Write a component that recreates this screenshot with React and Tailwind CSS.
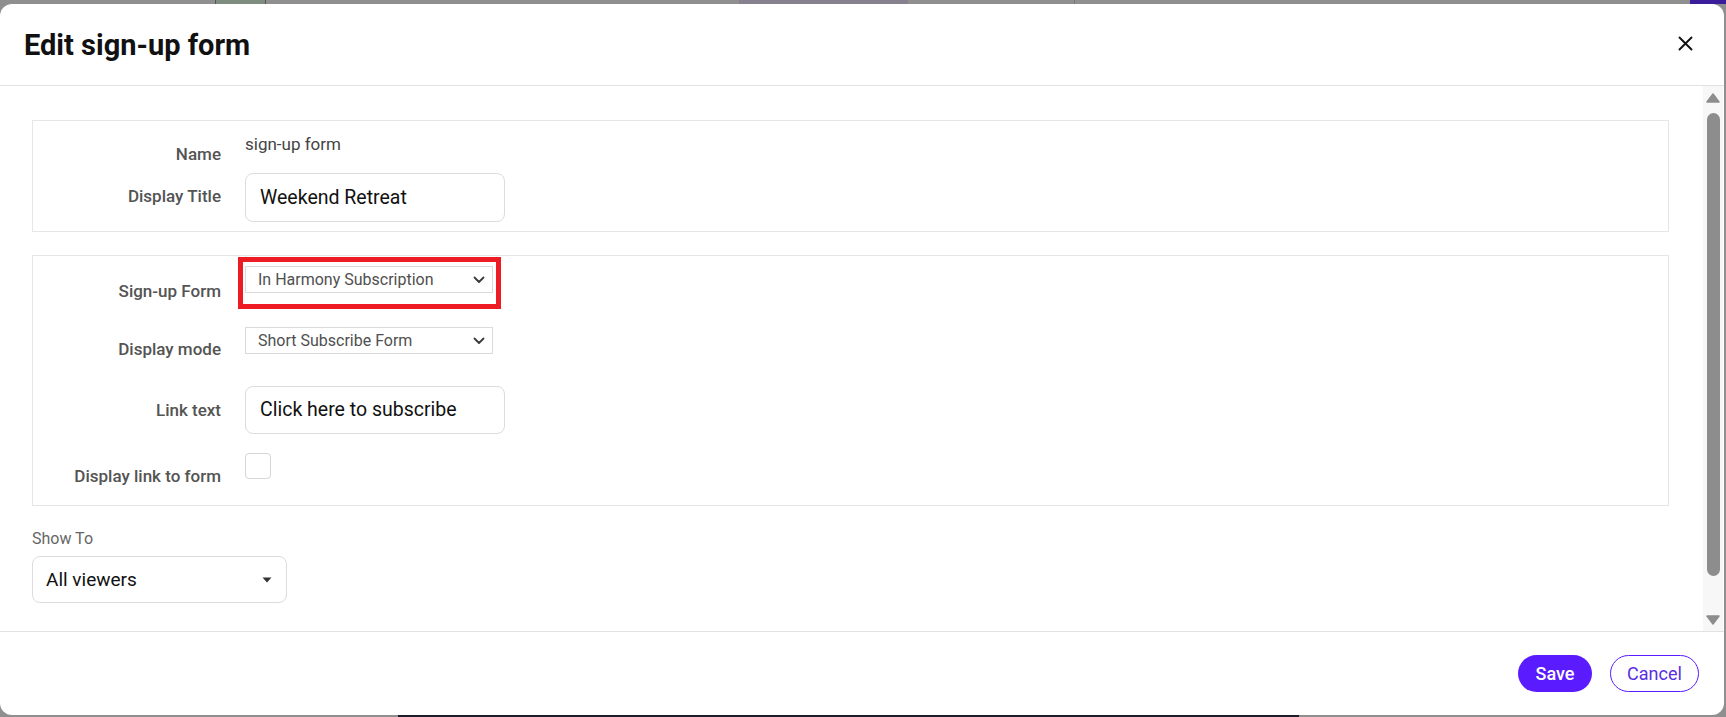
import React from 'react';

function Chevron() {
  return (
    <svg width="12" height="8" viewBox="0 0 12 8" fill="none" className="shrink-0">
      <path d="M1.5 1.5 L6 6 L10.5 1.5" stroke="#3a3a3a" strokeWidth="1.8" strokeLinecap="round" strokeLinejoin="round" />
    </svg>
  );
}

function SmallSelect({ value }) {
  return (
    <div className="flex items-center justify-between w-[248px] h-[27px] border border-[#dadada] bg-white pl-[12px] pr-[7px]">
      <span className="text-[16px] leading-[20px] text-[#4f4f4f]">{value}</span>
      <Chevron />
    </div>
  );
}

function TextInput({ value, h = 'h-[48px]' }) {
  return (
    <div className={`flex items-center w-[260px] ${h} border border-[#dcdcdc] rounded-[8px] bg-white pl-[14px]`}>
      <span className="text-[19.5px] leading-[24px] text-[#111]">{value}</span>
    </div>
  );
}

function Label({ children, mt }) {
  return (
    <div className={`w-[188px] shrink-0 text-right text-[17px] leading-[20px] font-medium text-[#545454] ${mt}`}>
      {children}
    </div>
  );
}

export default function App() {
  return (
    <div className="h-[717px] w-full overflow-hidden bg-[#8f8f8f] flex flex-col font-['Roboto',sans-serif]">
      {/* backdrop peeking above the dialog */}
      <div className="h-[4px] shrink-0 flex">
        <div className="w-[215px]" />
        <div className="w-[51px] bg-[#7f8c80] border-x border-[#555]" />
        <div className="w-[473px]" />
        <div className="w-[169px] bg-[#86808f]" />
        <div className="w-[167px] border-r border-[#777]" />
        <div className="flex-1" />
        <div className="w-[36px] bg-[#3b1d9c]" />
      </div>

      {/* dialog */}
      <div className="h-[711px] w-[1724px] shrink-0 bg-white rounded-[12px] flex flex-col">
        <div className="h-[82px] shrink-0 border-b border-[#e2e2e2] flex items-center justify-between pl-[24px] pr-[31px]">
          <h2 className="text-[29px] leading-[34px] font-bold text-[#111]">Edit sign-up form</h2>
          <svg width="15" height="15" viewBox="0 0 15 15" className="mt-[-3px]">
            <path d="M1.5 1.5 L13.5 13.5 M13.5 1.5 L1.5 13.5" stroke="#111" strokeWidth="1.9" strokeLinecap="round" />
          </svg>
        </div>

        <div className="h-[545px] shrink-0 flex">
          <div className="flex-1 pl-[32px] pr-[34px] pt-[34px]">
            {/* section 1 */}
            <div className="border border-[#e6e6e6] pt-[13px] pb-[9px]">
              <div className="flex gap-[24px] h-[30px]">
                <Label mt="mt-[10px]">Name</Label>
                <span className="text-[17px] leading-[20px] text-[#444]">sign-up form</span>
              </div>
              <div className="flex gap-[24px] mt-[9px]">
                <Label mt="mt-[13px]">Display Title</Label>
                <TextInput value="Weekend Retreat" h="h-[49px]" />
              </div>
            </div>

            {/* section 2 */}
            <div className="mt-[23px] border border-[#e6e6e6] pt-[10px] pb-[19px]">
              <div className="flex gap-[24px] items-start">
                <Label mt="mt-[15px]">Sign-up Form</Label>
                <div className="relative">
                  <SmallSelect value="In Harmony Subscription" />
                  <div className="absolute left-[-7px] top-[-9px] w-[263px] h-[52px] border-[5px] border-[#ed1c24]" />
                </div>
              </div>
              <div className="flex gap-[24px] items-start mt-[26px]">
                <Label mt="mt-[12px]">Display mode</Label>
                <SmallSelect value="Short Subscribe Form" />
              </div>
              <div className="flex gap-[24px] items-start mt-[27px]">
                <Label mt="mt-[14px]">Link text</Label>
                <TextInput value="Click here to subscribe" />
              </div>
              <div className="flex gap-[24px] items-start mt-[19px]">
                <Label mt="mt-[13px]">Display link to form</Label>
                <div className="w-[26px] h-[26px] rounded-[4px] border border-[#d6d6d6] bg-white" />
              </div>
            </div>

            {/* show to */}
            <div className="mt-[23px] text-[16px] leading-[20px] text-[#666]">Show To</div>
            <div className="mt-[7px] flex items-center justify-between w-[255px] h-[47px] border border-[#dcdcdc] rounded-[8px] pl-[13px] pr-[14px]">
              <span className="text-[19px] leading-[24px] text-[#111]">All viewers</span>
              <svg width="10" height="6" viewBox="0 0 10 6">
                <path d="M0.5 0.5 L9.5 0.5 L5 5.5 Z" fill="#333" />
              </svg>
            </div>
          </div>

          {/* scrollbar */}
          <div className="w-[20px] shrink-0 bg-[#f7f7f7] flex flex-col items-center pt-[7px] pb-[6px]">
            <svg width="14" height="10" viewBox="0 0 14 10">
              <path d="M7 1 L13 9 L1 9 Z" fill="#8d8d8d" stroke="#8d8d8d" strokeWidth="1.5" strokeLinejoin="round" />
            </svg>
            <div className="mt-[10px] w-[13px] h-[463px] rounded-full bg-[#8d8d8d]" />
            <div className="flex-1" />
            <svg width="14" height="10" viewBox="0 0 14 10">
              <path d="M1 1 L13 1 L7 9 Z" fill="#8d8d8d" stroke="#8d8d8d" strokeWidth="1.5" strokeLinejoin="round" />
            </svg>
          </div>
          <div className="w-[1px] shrink-0" />
        </div>

        <div className="flex-1 border-t border-[#e2e2e2] flex items-center justify-end gap-[18px] pr-[25px]">
          <button className="w-[74px] h-[37px] rounded-full bg-[#5a1cff] text-white text-[18px] font-medium">Save</button>
          <button className="w-[89px] h-[37px] rounded-full border border-[#5a1cff] text-[#5a2ee0] text-[18px]">Cancel</button>
        </div>
      </div>

      <div className="h-[2px] shrink-0 flex">
        <div className="w-[398px]" />
        <div className="w-[901px] bg-[#1c1b29]" />
      </div>
    </div>
  );
}
